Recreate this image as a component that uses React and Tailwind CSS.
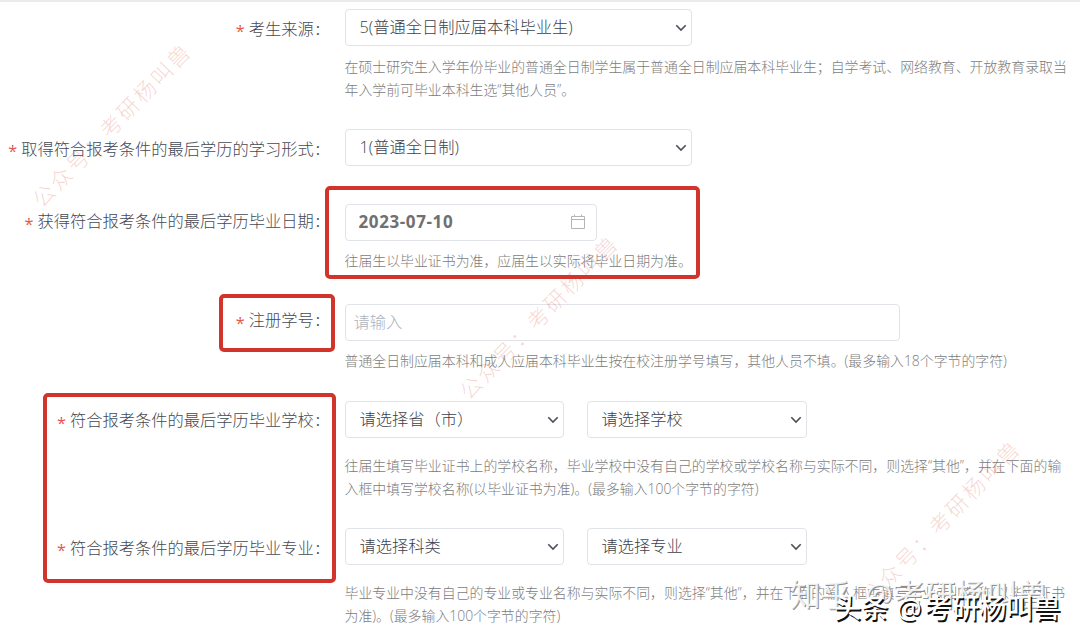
import clsx from "clsx"

const ROWS = [
  {
    label: "考生来源",
    labelHeight: "h-[40px]",
    height: "h-[120px]",
    fields: [{ kind: "select", value: "5(普通全日制应届本科毕业生)", width: "w-[347px]" }],
    hint: [
      "在硕士研究生入学年份毕业的普通全日制学生属于普通全日制应届本科毕业生；自学考试、网络教育、开放教育录取当",
      "年入学前可毕业本科生选“其他人员”。",
    ],
    hintGap: "pt-[9px]",
  },
  {
    label: "取得符合报考条件的最后学历的学习形式",
    labelHeight: "h-[40px]",
    height: "h-[75px]",
    fields: [{ kind: "select", value: "1(普通全日制)", width: "w-[347px]" }],
  },
  {
    label: "获得符合报考条件的最后学历毕业日期",
    labelHeight: "h-[35px]",
    height: "h-[100px]",
    fields: [{ kind: "date", value: "2023-07-10", width: "w-[252px]" }],
    hint: ["往届生以毕业证书为准，应届生以实际将毕业日期为准。"],
    hintGap: "pt-[8px]",
  },
  {
    label: "注册学号",
    labelHeight: "h-[33px]",
    height: "h-[97px]",
    fields: [{ kind: "input", value: "请输入", width: "w-[555px]" }],
    hint: ["普通全日制应届本科和成人应届本科毕业生按在校注册学号填写，其他人员不填。(最多输入18个字节的字符)"],
    hintGap: "pt-[8px]",
  },
  {
    label: "符合报考条件的最后学历毕业学校",
    labelHeight: "h-[39px]",
    height: "h-[127px]",
    fields: [
      { kind: "select", value: "请选择省（市）", width: "w-[219px]" },
      { kind: "select", value: "请选择学校", width: "w-[220px]" },
    ],
    hint: [
      "往届生填写毕业证书上的学校名称，毕业学校中没有自己的学校或学校名称与实际不同，则选择“其他”，并在下面的输",
      "入框中填写学校名称(以毕业证书为准)。(最多输入100个字节的字符)",
    ],
    hintGap: "pt-4",
  },
  {
    label: "符合报考条件的最后学历毕业专业",
    labelHeight: "h-[40px]",
    height: "h-[112px]",
    fields: [
      { kind: "select", value: "请选择科类", width: "w-[219px]" },
      { kind: "select", value: "请选择专业", width: "w-[220px]" },
    ],
    hint: [
      "毕业专业中没有自己的专业或专业名称与实际不同，则选择“其他”，并在下面的输入框中填写毕业专业名称(以毕业证书",
      "为准)。(最多输入100个字节的字符)",
    ],
    hintGap: "pt-4",
  },
]

// red frames around the rows that need care
const FRAMES = [
  "left-[325px] top-[186px] w-[375px] h-[93px]",
  "left-[219px] top-[294px] w-[116px] h-[58px]",
  "left-[43px] top-[393px] w-[293px] h-[190px]",
]

// each one is centred on its anchor and turned
const STAMPS = ["left-[112px] top-[125px]", "left-[539px] top-[317px]", "left-[941px] top-[522px]"]

function Chevron() {
  return (
    <svg viewBox="0 0 12 8" className="w-3 h-2 mr-[4px] shrink-0" fill="none" stroke="#4b4f57" strokeWidth="1.6">
      <path d="M1.3 1.3 6 6l4.700-4.700" />
    </svg>
  )
}

function Calendar() {
  return (
    <svg viewBox="0 0 16 16" className="w-4 h-4 mr-[10px] mb-[1px] shrink-0" fill="none" stroke="#b4b4b4" strokeWidth="1">
      <path d="M1.500 2.500h13v12h-13zM1.500 5.500h13M4.500 0.500v2M11.500 0.500v2" />
    </svg>
  )
}

function Field({ kind, value, width }) {
  return (
    <div
      className={clsx(
        "h-[37px] flex items-center justify-between border border-[#e0e3e8] rounded-[4px] bg-white",
        kind === "input" ? "pl-2" : kind === "date" ? "pl-[13px]" : "pl-[14px]",
        width,
      )}
    >
      <span
        className={clsx(
          "whitespace-nowrap leading-none",
          kind === "select" && "text-[16.250px] text-[#3c414b]",
          kind === "input" && "text-[16.250px] text-[#aeb2bc]",
          kind === "date" && "text-[17px] tracking-[0.600px] font-bold text-[#707070] pb-[3px]",
        )}
      >
        {value}
      </span>
      {kind === "select" && <Chevron />}
      {kind === "date" && <Calendar />}
    </div>
  )
}

function Row({ label, labelHeight, height, fields, hint, hintGap }) {
  return (
    <div className={clsx("flex gap-[22.500px]", height)}>
      <div
        className={clsx(
          "w-[322px] pr-[2px] shrink-0 flex items-center justify-end text-[16.250px] text-[#444953] whitespace-nowrap",
          labelHeight,
        )}
      >
        <span className="mr-1 pt-[5px] font-normal text-[#e5574e]">*</span>
        <span>{label}</span>
        <span className="ml-[2px] font-normal">:</span>
      </div>
      <div>
        <div className="flex gap-[23px]">
          {fields.map(f => <Field key={f.value} {...f} />)}
        </div>
        {hint && (
          <div className={clsx("text-[13.900px] leading-[23px] text-[#7c7c7c] whitespace-nowrap", hintGap)}>
            {hint.map(line => <div key={line}>{line}</div>)}
          </div>
        )}
      </div>
    </div>
  )
}

export default function App() {
  return (
    <div className="relative w-[1080px] h-[640px] overflow-hidden bg-white border-t-2 border-[#ebebed] font-light font-['Open_Sans','Noto_Sans_CJK_SC',sans-serif]">
      <div className="-mt-[2px] pt-[9px]">
        {ROWS.map(r => <Row key={r.label} {...r} />)}
      </div>

      <div className="absolute inset-x-0 -top-[2px] h-[640px] pointer-events-none">
        {STAMPS.map(pos => (
          <div
            key={pos}
            className={clsx(
              "absolute -translate-x-1/2 -translate-y-1/2 -rotate-[46deg] whitespace-nowrap text-[21.500px] tracking-[2.700px] leading-none text-[#e06a5e]/28",
              pos,
            )}
          >
            公众号：考研杨叫兽
          </div>
        ))}

        {FRAMES.map(pos => (
          <div key={pos} className={clsx("absolute border-4 border-[#d0342b] rounded-[5px]", pos)} />
        ))}

        <div className="absolute left-[790px] top-[578px] flex text-[30.600px] leading-[32px] font-normal whitespace-nowrap text-white/85 [text-shadow:1px_1px_0_#8c8c8c]">
          <span>知乎</span>
          <span className="ml-[14px] mr-[2px]">@</span>
          <span>考研杨叫兽</span>
        </div>
        <div className="absolute left-[834px] top-[592px] flex text-[27.200px] leading-[32px] font-medium whitespace-nowrap text-white [text-shadow:1.500px_1.500px_0_#111]">
          <span>头条</span>
          <span className="ml-[8px] mr-[3px] text-[28px]">@</span>
          <span>考研杨叫兽</span>
        </div>
      </div>
    </div>
  )
}
